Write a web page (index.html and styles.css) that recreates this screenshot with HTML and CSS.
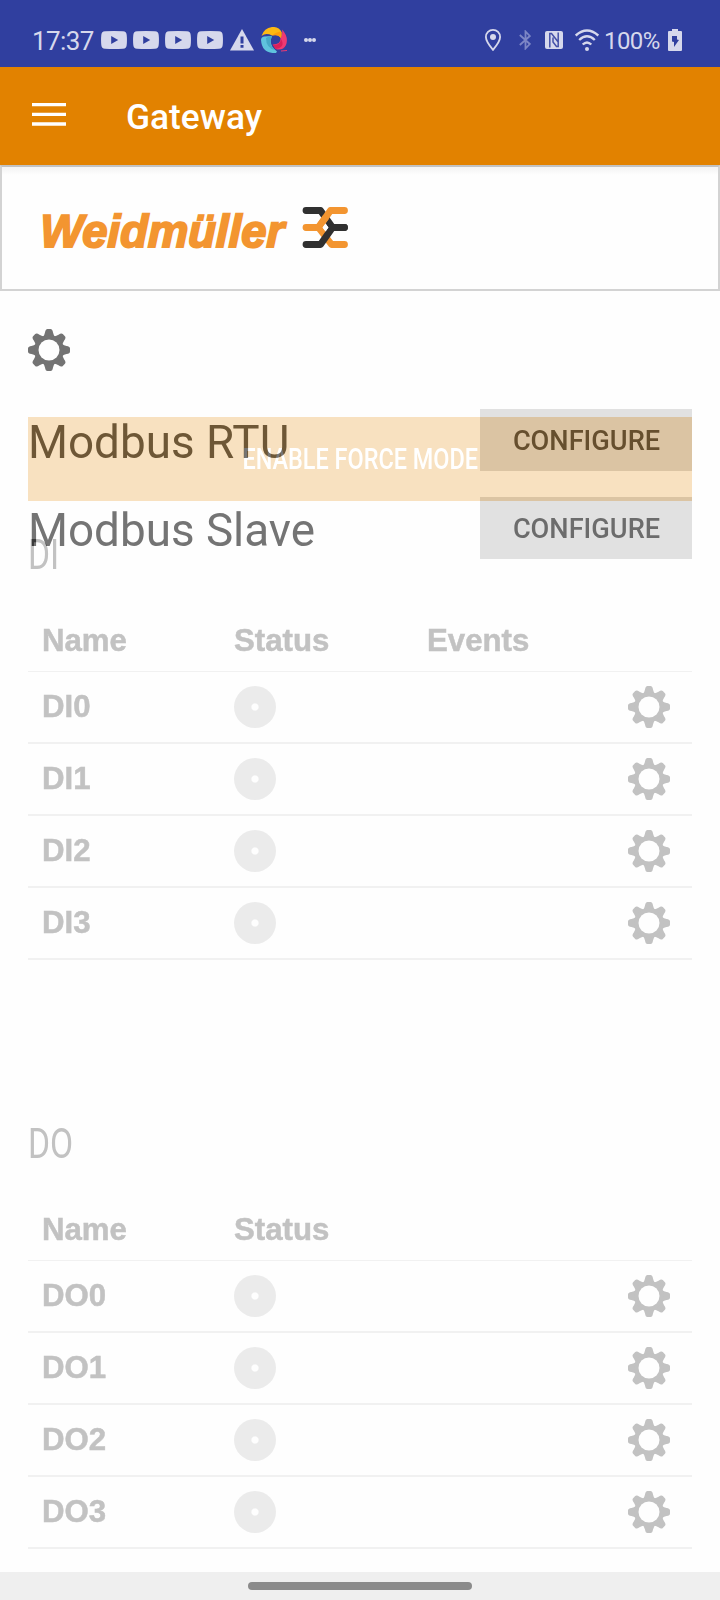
FILE: index.html
```html
<!DOCTYPE html>
<html lang="en">
<head>
<meta charset="utf-8">
<title>Gateway</title>
<link rel="stylesheet" href="styles.css">
</head>
<body>
<svg class="defs" aria-hidden="true">
  <symbol id="gear" viewBox="0 0 42 42">
    <g fill="currentColor">
      <path id="tooth" d="M11 11Q16 8.500 17 3.500Q17.500 0 19.500 0H22.500Q24.500 0 25 3.500Q26 8.500 31 11L28 14H14Z"/>
      <use href="#tooth" transform="rotate(45 21 21)"/>
      <use href="#tooth" transform="rotate(90 21 21)"/>
      <use href="#tooth" transform="rotate(135 21 21)"/>
      <use href="#tooth" transform="rotate(180 21 21)"/>
      <use href="#tooth" transform="rotate(225 21 21)"/>
      <use href="#tooth" transform="rotate(270 21 21)"/>
      <use href="#tooth" transform="rotate(315 21 21)"/>
    </g>
    <circle cx="21" cy="21" r="12.500" fill="none" stroke="currentColor" stroke-width="4"/>
    <circle cx="21" cy="21" r="10.500" fill="#fefefe"/>
  </symbol>
  <symbol id="video" viewBox="0 0 26 18">
    <path fill="#d6d8ec" d="M4 .3Q13-.3 22 .3Q25.500.500 25.700 4Q26.200 9 25.700 14Q25.500 17.500 22 17.700Q13 18.300 4 17.700Q.500 17.500.300 14Q-.200 9 .300 4Q.500.500 4 .3Z"/>
    <path fill="#303f9f" d="M10.200 5V13L17.200 9Z"/>
  </symbol>
</svg>

<header class="status">
  <span class="time">17:37</span>
  <div class="notes">
    <svg width="26" height="18"><use href="#video"/></svg>
    <svg width="26" height="18"><use href="#video"/></svg>
    <svg width="26" height="18"><use href="#video"/></svg>
    <svg width="26" height="18"><use href="#video"/></svg>
    <svg width="24" height="22" viewBox="0 0 24 22"><path fill="#d6d8ec" d="M12 0L24 21.500H0Z"/><path fill="#303f9f" d="M10.500 7.500h3v7h-3zM10.500 16h3v2.700h-3z"/></svg>
    <svg width="26" height="26" viewBox="0 0 26 26">
      <path fill="#fdb913" d="M.500 9Q3 1 11 0Q18-.500 20.500 5V12Q17 6.500 11 8.500Q5 5.500 .500 9Z"/>
      <path fill="#ff9d0b" d="M11 8.500Q19 7 20.500 12V5Q17 4 11 8.500Z"/>
      <path fill="#ee3a72" d="M21 2.500Q28 10 25 18Q22 24 14.500 22L12 17.500Q20 17 19.500 11Q22 8 21 2.500Z"/>
      <path fill="#d8205a" d="M11.500 17.500Q19 19 20 12Q25 20 14.500 22Z"/>
      <path fill="#5fc3de" d="M0 13Q0 10 3 9.500L11 9Q7 18 16 24.500L15 26Q1 27 0 13Z"/>
      <path fill="#46a9c8" d="M5 11Q8 9 11 9Q7 18 14 23Q5 21 5 11Z"/>
      <path stroke="#ee3a72" d="M20 24L26 23.500"/>
    </svg>
    <svg class="more" width="12" height="4" viewBox="0 0 12 4"><g fill="#d6d8ec"><circle cx="2" cy="2" r="2"/><circle cx="6" cy="2" r="2"/><circle cx="10" cy="2" r="2"/></g></svg>
  </div>
  <div class="system">
    <svg width="16" height="22" viewBox="0 0 16 22"><path fill="none" stroke="#d6d8ec" stroke-width="1.800" d="M8 20.800Q.900 12.500.900 8A7.100 7.100 0 0 1 15.100 8Q15.100 12.500 8 20.800Z"/><circle cx="8" cy="8" r="3" fill="#d6d8ec"/></svg>
    <svg class="bt" width="12" height="20" viewBox="0 0 12 20"><path fill="none" stroke="#7d86c5" stroke-width="1.800" d="M.800 5L10.800 14L6.500 18.500V1.500L10.800 6L.800 15"/></svg>
    <svg class="nfc" width="18" height="18" viewBox="0 0 18 18"><rect width="18" height="18" rx="2" fill="#d6d8ec"/><path fill="none" stroke="#4450a8" stroke-width="1.500" d="M4.800 16.500V2.500H6.500L13.200 11V1.500M13.200 11.500V15.500H11.500L8 11V6.500"/></svg>
    <svg class="wifi" width="24" height="22" viewBox="0 0 24 22"><g fill="none" stroke="#d6d8ec" stroke-width="2.400"><path d="M.700 6.500Q12-3.500 23.300 6.500"/><path d="M4.200 11Q12 3.500 19.800 11"/><path d="M7.700 15.500Q12 11.300 16.300 15.500"/></g><circle cx="12" cy="20" r="2" fill="#d6d8ec"/></svg>
    <span class="percent">100%</span>
    <svg class="battery" width="14" height="22" viewBox="0 0 14 22"><path fill="#d6d8ec" d="M4 0H10V2H13Q14 2 14 3V21Q14 22 13 22H1Q0 22 0 21V3Q0 2 1 2H4Z"/><path fill="#303f9f" d="M4 7H9V10.500L11 11L6 18V13L4 12.500Z"/></svg>
  </div>
</header>

<div class="appbar">
  <svg width="34" height="23" viewBox="0 0 34 23"><path fill="#fff" d="M0 0h34v3.300H0zM0 9.700h34v3.300H0zM0 19.300h34v3.400H0z"/></svg>
  <h1>Gateway</h1>
</div>

<div class="brand">
  <svg width="310" height="56" viewBox="0 0 310 56">
    <text class="wordmark" transform="translate(-2 50) skewX(-1)" x="0" y="0" textLength="244" lengthAdjust="spacingAndGlyphs">Weidmüller</text>
    <g fill="none" stroke-width="6.800" stroke-linecap="round" stroke-linejoin="round">
      <path stroke="#303030" d="M264 13.500H278.500L290.500 30.500H302.500"/>
      <path stroke="#f39530" d="M302.500 13.500H288.500L276.500 30.500H264"/>
      <path stroke="#f39530" d="M276.500 30.500L289.500 47.500H302.500"/>
      <path stroke="#303030" d="M264 47.500H278.500L290.500 30.500H302.500"/>
      <path stroke="#f39530" stroke-linecap="butt" d="M277 29.500L284 20"/>
    </g>
    <path fill="#fefefe" d="M283.500 26.500L286.500 30.500L283.500 34.500L280.500 30.500Z"/>
  </svg>
</div>

<main>
  <svg class="settings" width="42" height="42"><use href="#gear"/></svg>

  <div class="force"><span>ENABLE FORCE MODE</span></div>

  <section class="io">
    <h2>DI</h2>
    <div class="row head"><span>Name</span><span>Status</span><span>Events</span></div>
    <div class="row"><span>DI0</span><i class="led"></i><svg class="gear"><use href="#gear"/></svg></div>
    <div class="row"><span>DI1</span><i class="led"></i><svg class="gear"><use href="#gear"/></svg></div>
    <div class="row"><span>DI2</span><i class="led"></i><svg class="gear"><use href="#gear"/></svg></div>
    <div class="row"><span>DI3</span><i class="led"></i><svg class="gear"><use href="#gear"/></svg></div>
  </section>

  <section class="io">
    <h2>DO</h2>
    <div class="row head"><span>Name</span><span>Status</span></div>
    <div class="row"><span>DO0</span><i class="led"></i><svg class="gear"><use href="#gear"/></svg></div>
    <div class="row"><span>DO1</span><i class="led"></i><svg class="gear"><use href="#gear"/></svg></div>
    <div class="row"><span>DO2</span><i class="led"></i><svg class="gear"><use href="#gear"/></svg></div>
    <div class="row"><span>DO3</span><i class="led"></i><svg class="gear"><use href="#gear"/></svg></div>
  </section>

  <div class="modbus">
    <div class="entry"><span>Modbus RTU</span><button>CONFIGURE</button></div>
    <div class="entry"><span>Modbus Slave</span><button>CONFIGURE</button></div>
  </div>
</main>

<footer class="nav"><div class="pill"></div></footer>
</body>
</html>
```

FILE: styles.css
```css
* { box-sizing: border-box; }

body {
  margin: 0;
  width: 720px;
  height: 1600px;
  display: flex;
  flex-direction: column;
  background: #fefefe;
  font-family: Roboto, sans-serif;
  overflow: hidden;
}

svg { display: block; flex: none; }
.defs { position: absolute; width: 0; height: 0; }

.status {
  flex: none;
  height: 67px;
  padding: 13px 38px 0 32px;
  display: flex;
  align-items: center;
  background: #303f9f;
  color: #d6d8ec;
}
.time { width: 69px; font-size: 26px; letter-spacing: -0.6px; line-height: 30px; padding-top: 2px; white-space: nowrap; }
.notes { display: flex; align-items: center; gap: 6px; }
.notes svg:nth-child(5) { margin-left: 1px; }
.notes svg:nth-child(6) { margin-left: 1px; }
.more { margin-left: 11px; }
.system { margin-left: auto; display: flex; align-items: center; }
.bt { margin-left: 18px; }
.nfc { margin-left: 14px; }
.wifi { margin-left: 12px; }
.percent { width: 64px; margin-left: 5px; font-size: 24px; letter-spacing: -0.6px; line-height: 30px; padding-top: 2px; white-space: nowrap; }

.appbar {
  flex: none;
  height: 98px;
  padding: 0 32px;
  display: flex;
  align-items: center;
  gap: 60px;
  background: #e28200;
}
.appbar svg { margin-top: -4px; }
.appbar h1 { margin: 2px 0 0; font-size: 35.3px; font-weight: 500; line-height: 42px; color: #fff; }

.brand {
  flex: none;
  height: 126px;
  padding: 30px 0 0 40px;
  border: 2px solid #d3d3d3;
  border-top-color: #c2c2c2;
  background: linear-gradient(#f3f3f3, #fefefe 8px);
}
.brand svg { overflow: visible; }
.wordmark { font-family: "Liberation Sans", Arial, sans-serif; font-size: 46px; font-weight: 700; font-style: italic; fill: #f39530; stroke: #f39530; stroke-width: 2px; }

main { position: relative; flex: none; height: 1281px; padding: 38px 28px 0; isolation: isolate; background: #fefefe; }
.settings { color: #737373; }

.force {
  height: 84px;
  margin-top: 46px;
  display: flex;
  align-items: center;
  justify-content: center;
  background: #f8e1c0;
  color: #fff;
  font-size: 29.5px;
  font-weight: 500;
  line-height: 40px;
}
.force span { transform: scaleX(0.795); white-space: nowrap; }

.io { height: 589px; padding-top: 24px; color: #c2c2c2; }
.io h2 { width: max-content; margin: 0; font-size: 42px; line-height: 60px; font-weight: 400; transform: scaleX(0.8); transform-origin: left; }
.row {
  display: grid;
  grid-template-columns: 192px 193px 1fr;
  align-items: center;
  height: 72px;
  padding: 0 22px 0 14px;
  border-bottom: 2px solid #f1f1f1;
  font: bold 31.2px/36px "Liberation Sans", Arial, sans-serif;
  -webkit-text-stroke: 0.5px #c2c2c2;
}
.row.head { height: 61px; margin-top: 26px; border-bottom-width: 1px; }
.led { width: 42px; height: 42px; border-radius: 50%; background: radial-gradient(circle, #fefefe 3px, #ebebeb 4.2px); }
.gear { width: 42px; height: 42px; justify-self: end; }

/* The panel darkens whatever lies under it by a constant amount. */
.modbus {
  position: absolute;
  top: 118px;
  left: 28px;
  right: 28px;
  display: grid;
  gap: 26px;
  mix-blend-mode: difference;
}
.entry { display: flex; justify-content: space-between; height: 62px; color: #8a8a8a; font-size: 45.8px; line-height: 68px; white-space: nowrap; }
.entry button { width: 212px; height: 62px; padding: 1px 0 0 1px; border: 0; background: #1d1d1d; color: #929292; font: 500 27.200px/62px Roboto, sans-serif; }

.nav { flex: none; height: 28px; padding-top: 10px; background: #efefef; }
.pill { width: 224px; height: 8px; margin: 0 auto; border-radius: 4px; background: #8b8b8b; }
```
